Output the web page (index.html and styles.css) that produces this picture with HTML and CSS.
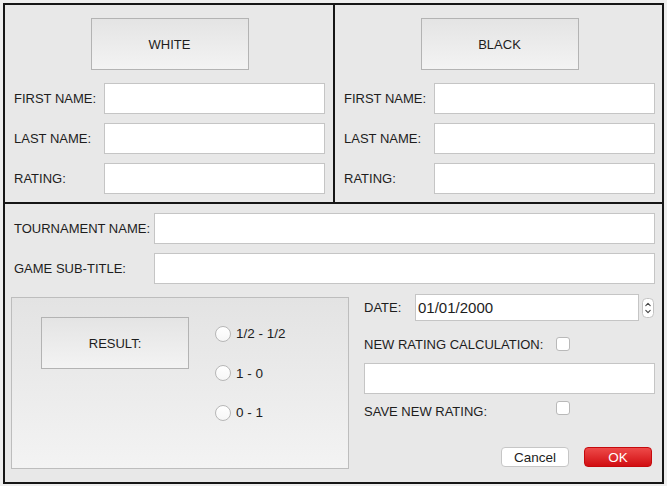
FILE: index.html
```html
<!DOCTYPE html>
<html>
<head>
<meta charset="utf-8">
<link rel="stylesheet" href="styles.css">
</head>
<body>
<div class="window">
  <div class="top">
    <div class="player player-left">
      <div class="side-btn">WHITE</div>
      <div class="field-row"><span class="label">FIRST NAME:</span><input class="field" type="text"></div>
      <div class="field-row"><span class="label">LAST NAME:</span><input class="field" type="text"></div>
      <div class="field-row"><span class="label">RATING:</span><input class="field" type="text"></div>
    </div>
    <div class="player player-right">
      <div class="side-btn">BLACK</div>
      <div class="field-row"><span class="label">FIRST NAME:</span><input class="field" type="text"></div>
      <div class="field-row"><span class="label">LAST NAME:</span><input class="field" type="text"></div>
      <div class="field-row"><span class="label">RATING:</span><input class="field" type="text"></div>
    </div>
  </div>
  <div class="bottom">
    <div class="wide-row"><span class="wide-label">TOURNAMENT NAME:</span><input class="field" type="text"></div>
    <div class="wide-row"><span class="wide-label">GAME SUB-TITLE:</span><input class="field" type="text"></div>
    <div class="lower">
      <div class="result-box">
        <div class="result-btn">RESULT:</div>
        <div class="radios">
          <div class="radio-item"><span class="radio"></span><span>1/2 - 1/2</span></div>
          <div class="radio-item"><span class="radio"></span><span>1 - 0</span></div>
          <div class="radio-item"><span class="radio"></span><span>0 - 1</span></div>
        </div>
      </div>
      <div class="right-col">
        <div class="date-row">
          <span class="date-label">DATE:</span>
          <div class="date-field">01/01/2000</div>
          <svg class="stepper" width="12" height="20" viewBox="0 0 12 20">
            <rect x="0.5" y="0.5" width="11" height="19" rx="4" ry="4" fill="#ffffff" stroke="#c3c3c3"/>
            <path d="M3.8 7.6 L6 5.4 L8.2 7.6" fill="none" stroke="#444" stroke-width="1.1" stroke-linecap="round" stroke-linejoin="round"/>
            <path d="M3.8 12.4 L6 14.6 L8.2 12.4" fill="none" stroke="#444" stroke-width="1.1" stroke-linecap="round" stroke-linejoin="round"/>
          </svg>
        </div>
        <div class="check-row">
          <span class="check-label">NEW RATING CALCULATION:</span>
          <span class="checkbox"></span>
        </div>
        <input class="field calc-field" type="text">
        <div class="check-row save-row">
          <span class="check-label">SAVE NEW RATING:</span>
          <span class="checkbox"></span>
        </div>
        <div class="buttons">
          <div class="btn btn-cancel">Cancel</div>
          <div class="btn btn-ok">OK</div>
        </div>
      </div>
    </div>
  </div>
</div>
</body>
</html>
```
FILE: styles.css
```css
* { box-sizing: border-box; }
html, body {
  margin: 0;
  padding: 0;
  background: #eeeeee;
  font-family: "Liberation Sans", Arial, Helvetica, sans-serif;
  font-size: 13px;
  color: #1d1d1d;
}
.window {
  margin: 3px 0 0 3px;
  width: 661px;
  height: 481px;
  border: 2px solid #161616;
  background: #e8e8e8;
  display: flex;
  flex-direction: column;
}
.top {
  display: flex;
  height: 199px;
  flex: none;
  border-bottom: 2px solid #161616;
}
.player {
  padding: 13px 8px 0 9px;
}
.player-left {
  width: 330px;
  border-right: 2px solid #161616;
}
.player-right {
  width: 327px;
  padding-right: 7px;
}
.side-btn, .result-btn {
  width: 158px;
  height: 52px;
  margin: 0 auto;
  border: 1px solid #b3b3b3;
  background: linear-gradient(#e4e4e4, #f3f3f3);
  display: flex;
  align-items: center;
  justify-content: center;
  color: #1d1d1d;
}
.field-row {
  display: flex;
  align-items: center;
  height: 31px;
  margin-top: 9px;
}
.side-btn + .field-row {
  margin-top: 13px;
}
.label {
  width: 90px;
  flex: none;
}
.field {
  flex: 1;
  min-width: 0;
  height: 31px;
  margin: 0;
  padding: 0 4px;
  border: 1px solid #c5c5c5;
  border-radius: 0;
  background: #ffffff;
  outline: none;
  font: inherit;
}
.bottom {
  flex: 1;
  padding: 9px 7px 0 9px;
}
.wide-row {
  display: flex;
  align-items: center;
  height: 31px;
  margin-bottom: 9px;
}
.wide-row + .wide-row {
  margin-bottom: 10px;
}
.wide-label {
  width: 140px;
  flex: none;
}
.lower {
  display: flex;
  margin-left: -3px;
}
.result-box {
  width: 338px;
  height: 172px;
  margin-top: 3px;
  flex: none;
  border: 1px solid #bdbdbd;
  background: linear-gradient(#e3e3e3, #f3f3f3);
  padding: 19px 0 0 29px;
  display: flex;
  align-items: flex-start;
}
.result-btn {
  width: 148px;
  margin: 0;
}
.radios {
  margin-left: 26px;
  margin-top: 6.5px;
  display: flex;
  flex-direction: column;
  gap: 19.5px;
}
.radio-item {
  display: flex;
  align-items: center;
  height: 20px;
  gap: 5px;
  font-size: 13.5px;
}
.radio {
  width: 16px;
  height: 16px;
  border-radius: 50%;
  border: 1px solid #b7b7b7;
  background: linear-gradient(#ffffff, #f6f6f6);
  flex: none;
}
.right-col {
  flex: 1;
  margin-left: 15px;
  display: flex;
  flex-direction: column;
}
.date-row {
  display: flex;
  align-items: center;
  height: 27px;
}
.date-label {
  width: 51px;
  flex: none;
}
.date-field {
  width: 224px;
  height: 27px;
  border: 1px solid #c5c5c5;
  background: #ffffff;
  font-size: 15px;
  padding-left: 2px;
  display: flex;
  align-items: center;
}
.stepper {
  margin-left: 3px;
  flex: none;
}
.check-row {
  display: flex;
  align-items: center;
  height: 20px;
  margin-top: 13px;
}
.check-label {
  width: 192px;
  flex: none;
}
.checkbox {
  width: 14px;
  height: 14px;
  border: 1px solid #b9b9b9;
  border-radius: 3px;
  background: #ffffff;
  flex: none;
}
.calc-field {
  flex: none;
  width: 100%;
  margin-top: 9px;
}
.save-row {
  margin-top: 7px;
}
.save-row .checkbox {
  margin-bottom: 7px;
}
.buttons {
  display: flex;
  justify-content: flex-end;
  gap: 15px;
  margin-top: 26px;
  padding-right: 3px;
}
.btn {
  width: 68px;
  height: 20px;
  border-radius: 4px;
  display: flex;
  align-items: center;
  justify-content: center;
  font-size: 13.5px;
}
.btn-cancel {
  background: #ffffff;
  border: 1px solid #c6c6c6;
  color: #1d1d1d;
}
.btn-ok {
  background: linear-gradient(#ee4a49, #d10e12);
  border: 1px solid #c50a0d;
  color: #ffffff;
}
```
